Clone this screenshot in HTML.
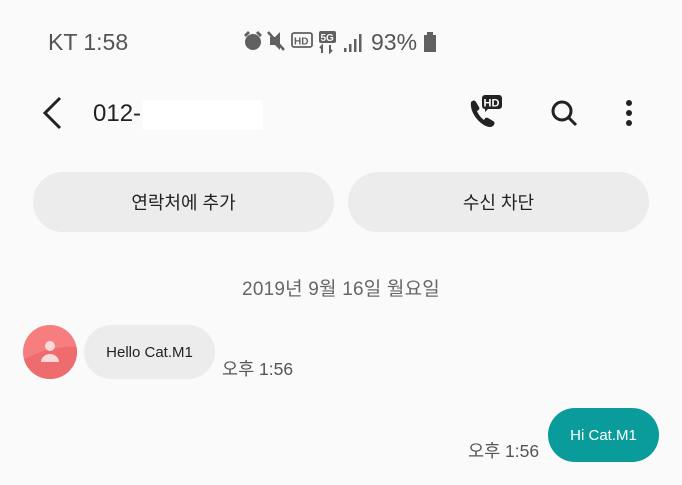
<!DOCTYPE html>
<html><head><meta charset="utf-8"><style>
*{margin:0;padding:0;box-sizing:border-box}
body{width:682px;height:485px;background:#fafafa;font-family:"Liberation Sans","Noto Sans CJK KR",sans-serif;position:relative;overflow:hidden;color:#222}
.a{position:absolute}
.btn{position:absolute;top:172px;height:60px;border-radius:30px;background:#ececec;font-size:18px;display:flex;align-items:center;justify-content:center;color:#222}
</style></head><body>
<div class="a" style="left:48px;top:29px;font-size:23px;color:#555">KT 1:58</div>
<svg class="a" style="left:242px;top:29px" width="200" height="26" viewBox="0 0 200 26">
<g fill="#606060">
<circle cx="11" cy="13" r="8"/><path d="M2 6l4-4 2 2-4 4zM20 6l-4-4-2 2 4 4z"/>
<path d="M28 8h5l5-5v18l-5-5h-5z"/><path d="M26 3l16 18" stroke="#606060" stroke-width="2.5"/>
<rect x="50" y="4" width="20" height="14" rx="2" fill="none" stroke="#606060" stroke-width="1.8"/>
<text x="52" y="15.5" font-size="10" font-weight="bold" font-family="Liberation Sans">HD</text>
<rect x="77" y="2" width="17" height="12" rx="2"/>
<text x="78.5" y="12" font-size="10" font-weight="bold" fill="#fafafa" font-family="Liberation Sans">5G</text>
<path d="M80 24v-7l-2 2M88 16v7l2-2" stroke="#606060" stroke-width="2" fill="none"/>
<rect x="102" y="19" width="2.5" height="4"/><rect x="107" y="15" width="2.5" height="8"/><rect x="112" y="10" width="2.5" height="13"/><rect x="117" y="5" width="2.5" height="18"/>
<rect x="182" y="6" width="12" height="17"/><rect x="185" y="3" width="6" height="3"/>
</g></svg>
<div class="a" style="left:371px;top:29px;font-size:23px;color:#555">93%</div>
<svg class="a" style="left:40px;top:96px" width="24" height="34"><path d="M20 2L5 17l15 15" stroke="#222" stroke-width="3" fill="none"/></svg>
<div class="a" style="left:93px;top:100px;font-size:24px">012-</div>
<div class="a" style="left:143px;top:100px;width:120px;height:30px;background:#fff"></div>
<svg class="a" style="left:466px;top:94px" width="40" height="38" viewBox="0 0 40 38">
<path d="M5 8c2-2 4-2 5 0l3 5c1 2 0 3-2 4 1 3 4 7 7 9 1-2 2-3 4-2l5 3c2 1 2 3 0 5-6 5-24-10-22-24z" fill="#222"/>
<path d="M16 1h17a3 3 0 013 3v8a3 3 0 01-3 3h-11l-3 3v-3a3 3 0 01-3-3v-8a3 3 0 013-3z" fill="#222"/>
<text x="17.5" y="12.5" font-size="11" font-weight="bold" fill="#fff" font-family="Liberation Sans">HD</text></svg>
<svg class="a" style="left:548px;top:98px" width="32" height="32"><circle cx="14" cy="13" r="9" stroke="#222" stroke-width="3" fill="none"/><path d="M20 19l8 8" stroke="#222" stroke-width="3"/></svg>
<svg class="a" style="left:622px;top:98px" width="14" height="32"><circle cx="7" cy="5" r="3" fill="#222"/><circle cx="7" cy="15" r="3" fill="#222"/><circle cx="7" cy="25" r="3" fill="#222"/></svg>
<div class="btn" style="left:33px;width:301px">연락처에 추가</div>
<div class="btn" style="left:348px;width:301px">수신 차단</div>
<div class="a" style="left:0;width:682px;top:274px;text-align:center;font-size:19px;color:#666;letter-spacing:0.2px">2019년 9월 16일 월요일</div>
<svg class="a" style="left:23px;top:325px" width="54" height="54"><defs><clipPath id="c"><circle cx="27" cy="27" r="27"/></clipPath></defs><circle cx="27" cy="27" r="27" fill="#f67e7e"/><path d="M0 35Q27 20 54 22V54H0z" fill="#ee6b6e" clip-path="url(#c)"/><circle cx="27" cy="21" r="5" fill="#fcd9da"/><path d="M18 37a9 8 0 0118 0z" fill="#fcd9da"/></svg>
<div class="a" style="left:84px;top:325px;width:131px;height:54px;border-radius:27px;background:#ececec;font-size:15px;display:flex;align-items:center;justify-content:center">Hello Cat.M1</div>
<div class="a" style="left:222px;top:356px;font-size:17.5px;color:#555">오후 1:56</div>
<div class="a" style="left:548px;top:408px;width:111px;height:54px;border-radius:27px;background:#0a9b9b;color:#fff;font-size:15px;display:flex;align-items:center;justify-content:center">Hi Cat.M1</div>
<div class="a" style="left:468px;top:438px;font-size:17.5px;color:#555">오후 1:56</div>
</body></html>
